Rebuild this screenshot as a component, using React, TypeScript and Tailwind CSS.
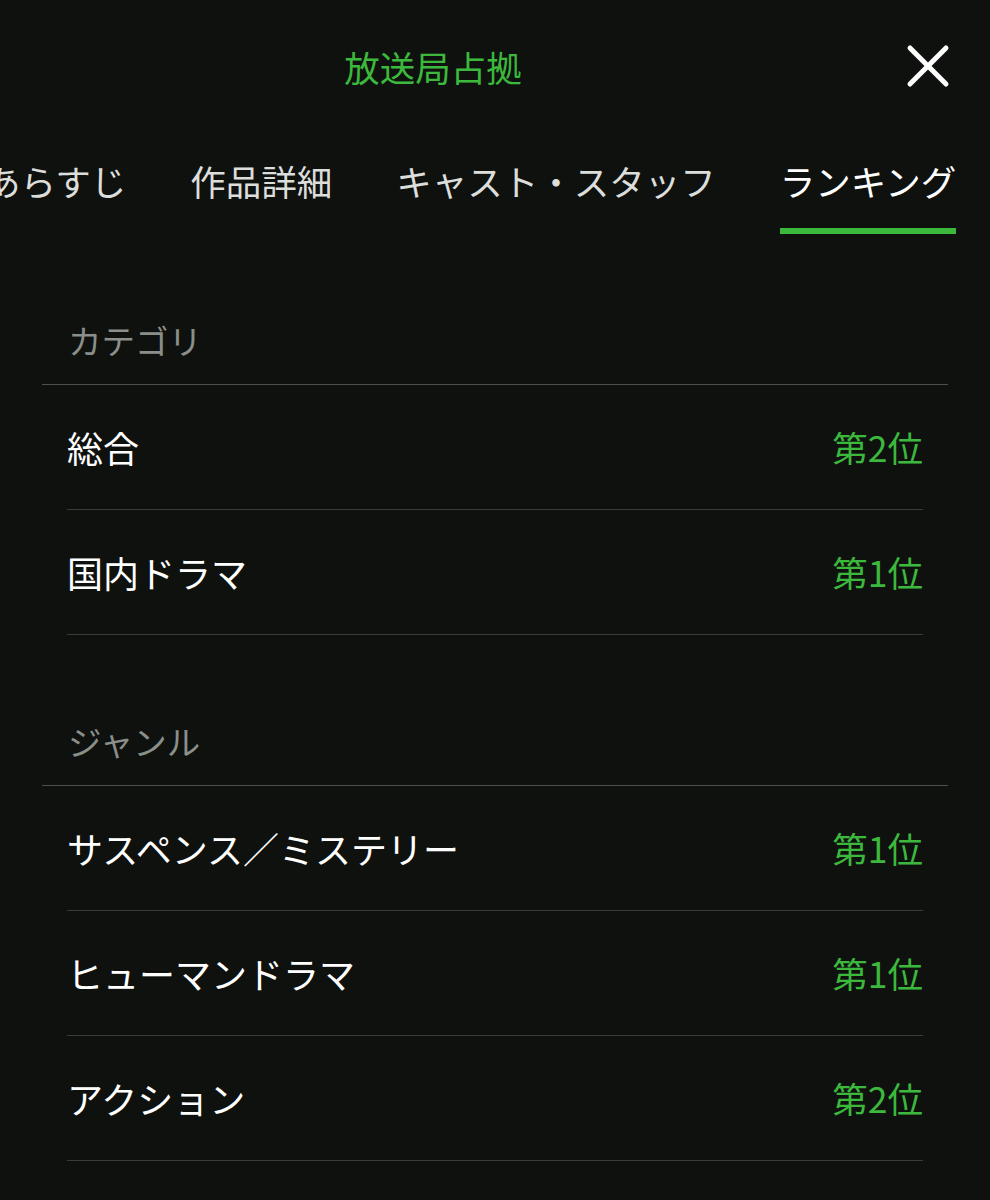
const categories = [
  { name: '総合', rank: '第2位' },
  { name: '国内ドラマ', rank: '第1位' },
]

const genres = [
  { name: 'サスペンス／ミステリー', rank: '第1位' },
  { name: 'ヒューマンドラマ', rank: '第1位' },
  { name: 'アクション', rank: '第2位' },
]

const tabs = ['あらすじ', '作品詳細', 'キャスト・スタッフ', 'ランキング']

function Section({ title, items }: { title: string; items: { name: string; rank: string }[] }) {
  return (
    <section>
      <div className="h-[150px] flex items-end px-[68px] pb-[24px]">
        <h2 className="text-[33.5px] leading-[40px] text-[#8a8f8a]">{title}</h2>
      </div>
      <div className="mx-[42px] h-px bg-[#4d4f4d]" />
      <ul className="mx-[67px]">
        {items.map(item => (
          <li
            key={item.name}
            className="h-[125px] flex items-center justify-between border-b border-[#3a3c3a]"
          >
            <span className="text-[36px] leading-[40px] text-white">{item.name}</span>
            <span className="text-[35.5px] leading-[40px] text-[#3cb83c]">{item.rank}</span>
          </li>
        ))}
      </ul>
    </section>
  )
}

export default function App() {
  return (
    <div
      className="w-[990px] h-[1200px] overflow-hidden bg-[#0f110f]"
      style={{ fontFamily: '"Noto Sans CJK JP", "Noto Sans", Roboto, sans-serif' }}
    >
      {/* Title bar */}
      <header className="relative h-[134px] flex items-center justify-center pr-[124px]">
        <h1 className="text-[35.5px] leading-[40px] text-[#3cb83c]">放送局占拠</h1>
        <button className="absolute left-[906px] top-[44px] text-white" aria-label="閉じる">
          <svg width="44" height="44" viewBox="0 0 44 44" fill="none" stroke="currentColor" strokeWidth="5" strokeLinecap="round">
            <path d="M4 4 L40 40" />
            <path d="M40 4 L4 40" />
          </svg>
        </button>
      </header>

      {/* Tabs, scrolled so the last tab is in view */}
      <nav className="h-[100px] flex gap-[64px] ml-[-15px] whitespace-nowrap">
        {tabs.map(tab => {
          const active = tab === 'ランキング'
          return (
            <div key={tab} className="flex flex-col items-stretch pt-[27px]">
              <span className={`text-[35.5px] leading-[40px] ${active ? 'text-white' : 'text-[#dcdedc]'}`}>
                {tab}
              </span>
              <div className={`mt-[27px] h-[6px] ${active ? 'bg-[#3cb83c]' : 'bg-transparent'}`} />
            </div>
          )
        })}
      </nav>

      <Section title="カテゴリ" items={categories} />
      <Section title="ジャンル" items={genres} />
    </div>
  )
}
